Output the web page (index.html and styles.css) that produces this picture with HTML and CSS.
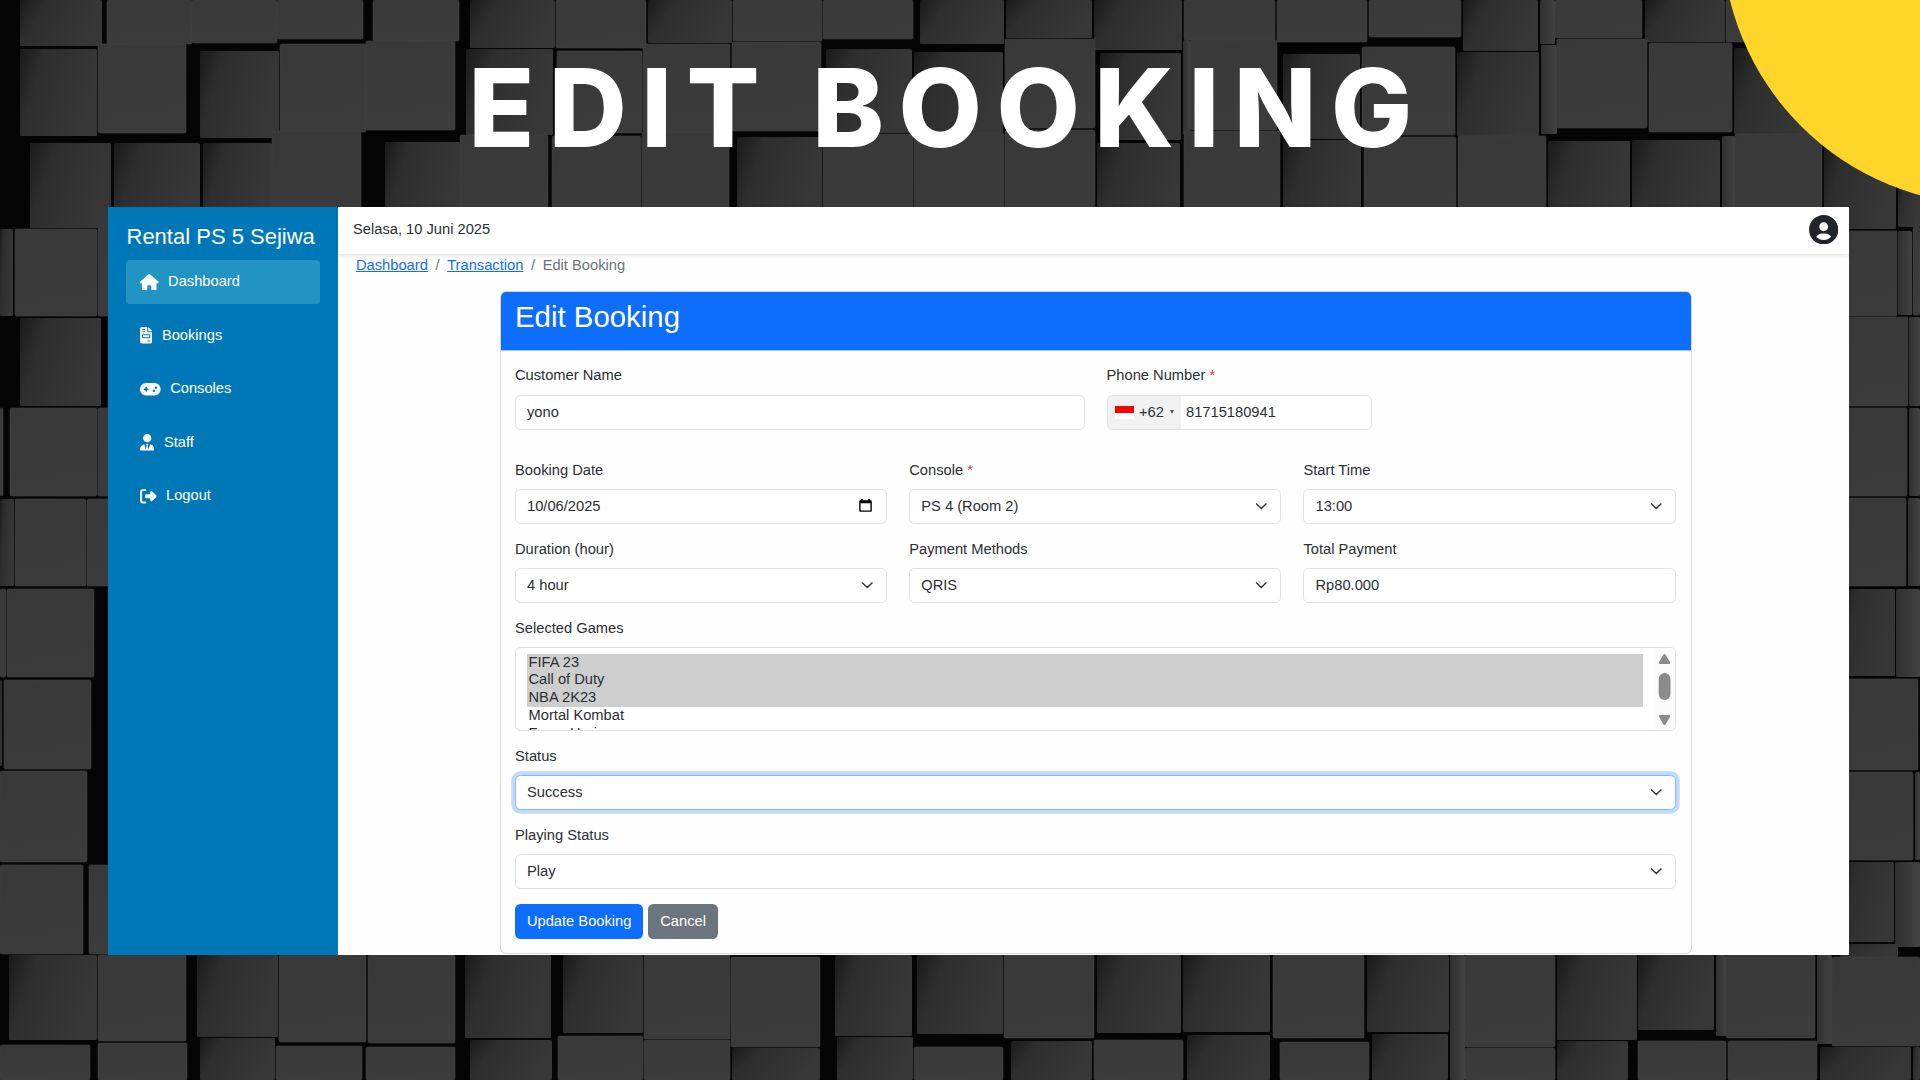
FILE: index.html
```html
<!DOCTYPE html>
<html lang="id">
<head>
<meta charset="utf-8">
<title>Edit Booking</title>
<link rel="stylesheet" href="styles.css">
</head>
<body>
<svg class="backdrop" viewBox="0 0 1920 1080" aria-hidden="true">
  <defs>
    <linearGradient id="lit" x1="0" y1="0" x2="0.15" y2="1"><stop offset="0" stop-color="#393939"/><stop offset="1" stop-color="#3b3b3b"/></linearGradient>
    <linearGradient id="dim" x1="0" y1="0" x2="1" y2="0.35"><stop offset="0" stop-color="#1a1a1a"/><stop offset="0.3" stop-color="#2e2e2e"/><stop offset="1" stop-color="#373737"/></linearGradient>
    <linearGradient id="side" x1="0" y1="0" x2="1" y2="0"><stop offset="0" stop-color="#303030"/><stop offset="1" stop-color="#424242"/></linearGradient>
  </defs>
  <g id="blocks"></g>
  <circle class="sun" cx="1991" cy="-64" r="268.800"/>
</svg>
<div class="slide">
  <h1 class="slide-title">EDIT BOOKING</h1>
  <div class="app">
    <aside class="sidebar">
      <div class="brand">Rental PS 5 Sejiwa</div>
      <nav class="menu">
        <a class="menu-item active"><svg class="icon" viewBox="0 0 576 512"><path d="M575.800 255.500c0 18-15 32.100-32 32.100h-32l.7 160.200c0 2.700-.2 5.400-.5 8.100V472c0 22.100-17.900 40-40 40H392c-22.100 0-40-17.900-40-40V384c0-17.700-14.300-32-32-32H256c-17.700 0-32 14.300-32 32v88c0 22.100-17.900 40-40 40H104c-22.100 0-40-17.900-40-40V287.600H32c-18 0-32-14-32-32.100c0-9 3-17 10-24L266.400 8c7-7 15-8 22-8s15 2 21 7L564.800 231.500c8 7 12 15 11 24z"/></svg>Dashboard</a>
        <a class="menu-item"><svg class="icon" viewBox="0 0 384 512"><path fill-rule="evenodd" d="M64 0C28.700 0 0 28.700 0 64V448c0 35.300 28.700 64 64 64H320c35.300 0 64-28.700 64-64V160H256c-17.700 0-32-14.300-32-32V0H64zM256 0V128H384L256 0zM80 64h64a16 16 0 0 1 0 32H80a16 16 0 0 1 0-32zM80 128h64a16 16 0 0 1 0 32H80a16 16 0 0 1 0-32zM96 224H288c17.700 0 32 14.300 32 32v64c0 17.700-14.300 32-32 32H96c-17.700 0-32-14.300-32-32V256c0-17.700 14.300-32 32-32zM96 256v64H288V256H96zM240 416h64a16 16 0 0 1 0 32H240a16 16 0 0 1 0-32z"/></svg>Bookings</a>
        <a class="menu-item"><svg class="icon" viewBox="0 0 640 512"><path fill-rule="evenodd" d="M192 64C86 64 0 150 0 256S86 448 192 448H448c106 0 192-86 192-192s-86-192-192-192H192zM496 168a40 40 0 1 1 0 80 40 40 0 1 1 0-80zM392 304a40 40 0 1 1 80 0 40 40 0 1 1-80 0zM168 200c0-13.300 10.700-24 24-24s24 10.700 24 24v32h32c13.300 0 24 10.700 24 24s-10.700 24-24 24H216v32c0 13.300-10.700 24-24 24s-24-10.700-24-24V280H136c-13.300 0-24-10.700-24-24s10.700-24 24-24h32V200z"/></svg>Consoles</a>
        <a class="menu-item"><svg class="icon" viewBox="0 0 448 512"><path d="M96 128a128 128 0 1 0 256 0A128 128 0 1 0 96 128zm94.500 200.200l18.600 31L175.800 483.100l-36-146.900c-2-8.100-9.800-13.400-17.900-11.300C51.900 342.400 0 405.800 0 481.300c0 17 13.800 30.700 30.700 30.700H417.300c17 0 30.700-13.800 30.700-30.700c0-75.500-51.900-138.900-121.900-156.400c-8.100-2-15.900 3.300-17.900 11.300l-36 146.900L238.900 359.200l18.600-31c6.400-10.700-1.300-24.200-13.700-24.200H204.300c-12.400 0-20.100 13.600-13.700 24.200z"/></svg>Staff</a>
        <a class="menu-item"><svg class="icon" viewBox="0 0 512 512"><path d="M377.900 105.900L500.700 228.700c7.200 7.200 11.300 17.100 11.300 27.300s-4.100 20.100-11.300 27.300L377.900 406.100c-6.400 6.400-15 9.900-24 9.900c-18.700 0-33.900-15.200-33.900-33.900V320H192c-17.700 0-32-14.300-32-32V224c0-17.700 14.300-32 32-32H320V129.900c0-18.700 15.200-33.900 33.900-33.900c9 0 17.600 3.600 24 9.900zM160 96H96c-17.700 0-32 14.300-32 32V384c0 17.700 14.300 32 32 32h64c17.700 0 32 14.300 32 32s-14.300 32-32 32H96c-53 0-96-43-96-96V128C0 75 43 32 96 32h64c17.700 0 32 14.300 32 32s-14.300 32-32 32z"/></svg>Logout</a>
      </nav>
    </aside>
    <main class="content">
      <header class="topbar">
        <span>Selasa, 10 Juni 2025</span>
        <svg class="avatar" viewBox="2 2 20 20"><path d="M12 2C6.579 2 2 6.579 2 12s4.579 10 10 10 10-4.579 10-10S17.421 2 12 2zm0 5c1.727 0 3 1.272 3 3s-1.273 3-3 3c-1.726 0-3-1.272-3-3s1.274-3 3-3zm-5.106 9.772c.897-1.320 2.393-2.200 4.106-2.200h2c1.714 0 3.209.880 4.106 2.200C15.828 18.140 14.015 19 12 19s-3.828-.860-5.106-2.228z"/></svg>
      </header>
      <nav class="breadcrumb"><a>Dashboard</a><i>/</i><a>Transaction</a><i>/</i><span>Edit Booking</span></nav>
      <section class="card">
        <h2 class="card-header">Edit Booking</h2>
        <form class="card-body">
          <div class="row row-contact">
            <div class="field"><label>Customer Name</label><div class="control">yono</div></div>
            <div class="field"><label>Phone Number <b>*</b></label>
              <div class="control phone"><span class="dial"><span class="flag"></span>+62<span class="caret"></span></span>81715180941</div></div>
          </div>
          <div class="row">
            <div class="field"><label>Booking Date</label><div class="control date">10/06/2025<svg class="calendar" viewBox="0 0 13 13"><path fill-rule="evenodd" d="M2 0h1.800v1.200h5.400V0H11v1.200h.8q1 0 1 1v9.600q0 1-1 1H1.200q-1 0-1-1V2.200q0-1 1-1H2zM1.600 4.200v7.200h9.800V4.200z"/></svg></div></div>
            <div class="field"><label>Console <b>*</b></label><div class="control">PS 4 (Room 2)<svg class="chevron" viewBox="0 0 16 16"><path d="m2 5 6 6 6-6"/></svg></div></div>
            <div class="field"><label>Start Time</label><div class="control">13:00<svg class="chevron" viewBox="0 0 16 16"><path d="m2 5 6 6 6-6"/></svg></div></div>
          </div>
          <div class="row">
            <div class="field"><label>Duration (hour)</label><div class="control">4 hour<svg class="chevron" viewBox="0 0 16 16"><path d="m2 5 6 6 6-6"/></svg></div></div>
            <div class="field"><label>Payment Methods</label><div class="control">QRIS<svg class="chevron" viewBox="0 0 16 16"><path d="m2 5 6 6 6-6"/></svg></div></div>
            <div class="field"><label>Total Payment</label><div class="control">Rp80.000</div></div>
          </div>
          <div class="field"><label>Selected Games</label>
            <div class="listbox">
              <ul class="options"><li class="on">FIFA 23</li><li class="on">Call of Duty</li><li class="on">NBA 2K23</li><li>Mortal Kombat</li><li>Forza Horizon</li></ul>
              <svg class="scrollbar" viewBox="0 0 21 82"><path d="M9.300 6.800q1.200-1.600 2.400 0l4.300 7.400q.6 1.800-.9 1.800H5.900q-1.500 0-.9-1.800zM9.300 76.200q1.200 1.600 2.400 0l4.300-7.400q.6-1.800-.9-1.800H5.900q-1.500 0-.9 1.800z"/><rect x="4.700" y="25" width="11.800" height="27" rx="5.900"/></svg>
            </div></div>
          <div class="field"><label>Status</label><div class="control focused">Success<svg class="chevron" viewBox="0 0 16 16"><path d="m2 5 6 6 6-6"/></svg></div></div>
          <div class="field"><label>Playing Status</label><div class="control">Play<svg class="chevron" viewBox="0 0 16 16"><path d="m2 5 6 6 6-6"/></svg></div></div>
          <div class="actions"><span class="btn primary">Update Booking</span><span class="btn secondary">Cancel</span></div>
        </form>
      </section>
    </main>
  </div>
</div>
<script src="blocks.js"></script>
</body>
</html>
```
FILE: styles.css
```css
* { box-sizing: border-box; margin: 0; padding: 0; }
body { width: 1920px; height: 1080px; overflow: hidden; background: #050505; font: 14.7px/22px "Liberation Sans", Arial, sans-serif; color: #2b2f33; }

.backdrop { position: absolute; inset: 0; width: 1920px; height: 1080px; }
.lit { fill: url(#lit); stroke: #404040; stroke-width: .6; }
.dim { fill: url(#dim); }
.side { fill: url(#side); }
.sun { fill: #ffd52a; }

.slide { position: relative; padding: 0 71px 0 108px; }
.slide-title { height: 206.7px; padding-left: 360.500px; font: 800 108px/215px Inter, sans-serif; letter-spacing: 14.450px; color: #fff; white-space: nowrap; }
.app { display: flex; height: 748.6px; background: #fff; }

.sidebar { flex: none; width: 230px; padding: 15px 18px; background: #0078b7; color: #fff; }
.brand { padding-left: .5px; font-size: 22px; line-height: 30px; white-space: nowrap; }
.menu { display: flex; flex-direction: column; gap: 9.500px; margin-top: 8px; }
.menu-item { display: flex; align-items: center; gap: 9.500px; height: 44px; padding: 0 0 1px 14px; border-radius: 4px; }
.menu-item.active { background: #2294c4; }
.icon { height: 16.500px; margin-top: 2px; fill: #fff; }

.content { flex: 1; background: #fefefe; }
.topbar { display: flex; align-items: center; justify-content: space-between; height: 47px; padding: 0 11px 1px 15px; background: #fff; box-shadow: 0 2px 4px rgba(0,0,0,.1); }
.topbar span { padding-bottom: 1px; }
.avatar { width: 29.400px; height: 29.400px; fill: #212529; }
.breadcrumb { display: flex; gap: 7.600px; height: 37.800px; padding: 0 18px; color: #6c757d; }
.breadcrumb a { color: #0d6efd; text-decoration: underline; }
.breadcrumb i { font-style: normal; }

.card { width: 1191.500px; height: 662.900px; margin-left: 162px; border: 1px solid #d6d8da; border-radius: 6px; }
.card-header { height: 58.500px; padding: 7px 14px 0; border-bottom: 1px solid #9fc5fb; border-radius: 5px 5px 0 0; background: #0d6efd; color: #fff; font-size: 29.400px; line-height: 35px; font-weight: 400; }
.card-body { display: flex; flex-direction: column; gap: 15px; padding: 14.400px 14.800px 0 14px; }
.row { display: grid; grid-template-columns: repeat(3, 1fr); gap: 22px; }
.row-contact { grid-template-columns: 569.500px 265px; margin-bottom: 15px; }
.field { display: flex; flex-direction: column; gap: 7.200px; }
.field label { height: 22px; line-height: 20px; }
.field label b { color: #dc3545; font-weight: 400; }
.control { display: flex; align-items: center; justify-content: space-between; height: 35px; padding: 0 12.500px 1px 11px; border: 1px solid #dee2e6; border-radius: 5.500px; background: #fff; }
.control.focused { border-color: #86b7fe; box-shadow: 0 0 0 3.700px #c2d9fe; }
.phone { justify-content: flex-start; padding: 0; }
.dial { display: flex; align-items: center; width: 73px; height: 33px; margin-right: 5.500px; padding-left: 7.500px; border-radius: 5px 0 0 5px; background: #f1f1f1; }
.flag { width: 18.500px; height: 13px; margin-right: 5.500px; background: linear-gradient(#f00 50%, #fff 50%); }
.caret { margin-left: 6px; border: 2.700px solid transparent; border-top: 4px solid #555; border-bottom: 0; }
.date { padding-right: 14px; }
.calendar { width: 13px; height: 13px; fill: #000; }
.chevron { width: 12.500px; height: 12.500px; fill: none; stroke: #343a40; stroke-width: 1.900; stroke-linecap: round; stroke-linejoin: round; }

.listbox { display: flex; height: 83.600px; border: 1px solid #dee2e6; border-radius: 5.500px; overflow: hidden; background: #fff; }
.options { flex: 1; padding: 5.500px 11px; list-style: none; }
.options li { height: 17.800px; padding-left: 1.500px; line-height: 16.500px; }
.options .on { background: #cecece; }
.scrollbar { width: 21px; height: 82px; background: #fbfbfb; fill: #8b8b8b; }

.actions { display: flex; gap: 5px; }
.btn { height: 35px; padding: 0 11.900px; border-radius: 5.500px; line-height: 34px; color: #fff; }
.primary { background: #0d6efd; }
.secondary { background: #6c757d; }
```
FILE: blocks.js
```js
// Cube faces of the wall: left, top, right, bottom, tone (l = lit, d = in shadow, s = side wall)
const faces = `
20 0 102 46 d|107 0 192 44 l|192 0 277 43 l|277 0 363 39 l|373 0 459 41 l|470 0 555 48 d|556 0 646 48 l
648 0 732 43 d|733 0 822 41 l|823 0 913 39 l|920 0 1004 44 d|1006 0 1092 38 d|1094 0 1182 50 d|1184 0 1275 40 l
1277 0 1367 42 l|1369 0 1461 37 l|1463 0 1538 51 d|1540 0 1555 44 s|1555 0 1642 38 l|1645 0 1725 42 d|1726 0 1750 42 l
20 49 97 136 d|98 44 186 133 l|200 51 279 138 d|280 44 366 132 l|366 41 455 130 l|466 49 553 135 d|557 51 642 133 l
643 44 730 132 l|732 42 821 131 l|826 49 912 133 d|914 52 1003 133 d|1005 39 1095 128 l|1100 53 1181 140 d
1183 40 1190 135 s|1190 40 1277 130 l|1283 54 1360 139 d|1362 47 1455 135 l|1457 52 1539 136 d|1541 45 1557 134 s
1557 39 1647 128 l|1649 43 1732 132 l|1734 48 1820 134 d
30 143 111 228 d|114 143 200 228 d|203 143 272 228 d|272 131 361 228 l|385 142 460 228 d|460 135 548 228 l|552 136 641 228 l
642 132 729 228 l|737 137 822 228 d|823 134 913 228 l|914 133 1004 228 l|1005 130 1095 228 l|1097 143 1180 228 d
1184 131 1280 228 l|1283 140 1361 228 d|1364 137 1456 228 l|1458 136 1546 228 l|1548 141 1630 228 d|1632 140 1720 228 d
1722 136 1735 228 s|1735 134 1822 228 l|1824 140 1896 229 d|1898 180 1920 227 d
0 229 13 316 d|15 229 97 316 l|98 226 112 316 l|20 318 101 406 d|0 408 3 496 l|10 408 97 496 l|98 408 112 496 l
0 499 14 586 d|15 499 86 586 l|87 499 112 586 l|0 589 6 677 l|7 589 94 677 l|0 680 2 766 d|4 680 91 769 l
0 771 87 862 l|0 865 83 954 l|89 865 112 954 l
1840 231 1897 316 l|1898 231 1912 315 s|1913 227 1920 315 l|1840 317 1908 406 l|1909 317 1920 406 s|1840 408 1907 496 l|1909 408 1920 496 s
1840 498 1906 586 l|1908 498 1920 586 s|1840 589 1895 676 d|1896 589 1920 677 s|1840 679 1918 770 l|1840 772 1913 860 l
1915 772 1920 860 s|1840 862 1894 942 d|1895 862 1920 947 s|1840 944 1898 957 d
9 955 97 1040 d|98 955 186 1041 l|197 955 278 1037 d|279 955 366 1042 l|368 955 455 1043 l|465 955 551 1038 d|563 955 643 1033 d
644 955 730 1039 l|731 957 820 1047 l|835 955 912 1036 d|917 955 1003 1034 d|1004 955 1094 1038 l|1097 955 1181 1033 d
1183 955 1270 1032 d|1273 955 1364 1038 l|1367 955 1449 1032 d|1450 955 1465 1045 s|1465 955 1555 1047 l|1557 955 1637 1040 d
1638 955 1714 1030 d|1716 955 1726 1036 s|1726 955 1815 1038 l|1817 955 1832 1044 s|1832 957 1920 1046 l
0 1045 90 1080 l|98 1043 187 1080 l|200 1038 275 1080 d|276 1046 362 1080 l|366 1047 455 1080 l|470 1040 552 1080 d
558 1036 643 1080 l|644 1040 730 1080 l|732 1048 820 1080 d|837 1037 913 1080 d|914 1047 1003 1080 l|1011 1041 1092 1080 d
1094 1040 1183 1080 l|1187 1035 1270 1080 d|1280 1042 1369 1080 l|1372 1034 1448 1080 d|1450 1036 1465 1080 s|1465 1048 1555 1080 l
1557 1041 1628 1080 d|1638 1041 1726 1080 l|1728 1041 1817 1080 l|1820 1047 1911 1080 d|1913 1047 1920 1080 d`;
const tones = { l: 'lit', d: 'dim', s: 'side' };
document.getElementById('blocks').innerHTML = faces.trim().split(/[|\n]/).map(line => {
  const [x, y, right, bottom, tone] = line.split(' ');
  return `<rect class="${tones[tone]}" x="${x}" y="${y}" width="${right - x}" height="${bottom - y}" rx="1.5"/>`;
}).join('');
```
